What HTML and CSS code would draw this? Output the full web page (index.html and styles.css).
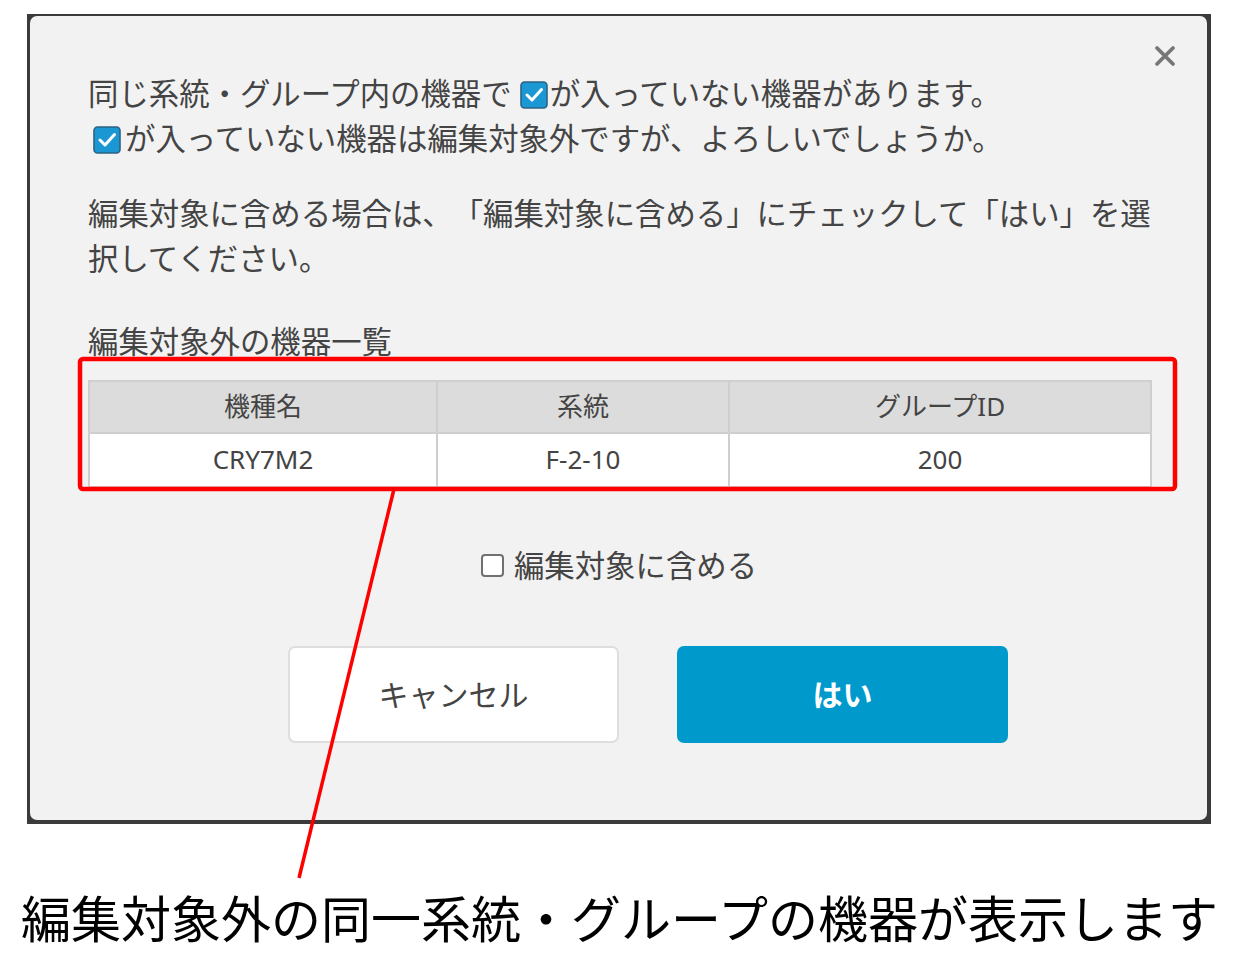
FILE: index.html
```html
<!DOCTYPE html>
<html>
<head>
	<meta charset="UTF-8">
	<title>編集対象外の機器</title>
	<link rel="stylesheet" href="styles.css">
</head>
<body>

<div class="backdrop">
	<div class="dialog">
		<button class="close" type="button" title="閉じる">
			<svg width="22" height="22" viewBox="0 0 22 22"><path d="M3 3 L19 19 M19 3 L3 19" stroke="#777" stroke-width="3.8" stroke-linecap="round"/></svg>
		</button>

		<p class="msg">同じ系統・グループ内の機器で<svg class="tick" width="28" height="28" viewBox="0 0 28 28"><rect x="1" y="1" width="26" height="26" rx="3.5" fill="#1b97d3" stroke="#2c6384" stroke-width="1.6"/><path d="M7 14 L12 19 L21.5 8.5" fill="none" stroke="#fff" stroke-width="3" stroke-linecap="round" stroke-linejoin="round"/></svg>が入っていない機器があります。<br><svg class="tick tick-first" width="28" height="28" viewBox="0 0 28 28"><rect x="1" y="1" width="26" height="26" rx="3.5" fill="#1b97d3" stroke="#2c6384" stroke-width="1.6"/><path d="M7 14 L12 19 L21.5 8.5" fill="none" stroke="#fff" stroke-width="3" stroke-linecap="round" stroke-linejoin="round"/></svg>が入っていない機器は編集対象外ですが、よろしいでしょうか。</p>

		<p class="msg msg-next">編集対象に含める場合は、「編集対象に含める」にチェックして「はい」を選択してください。</p>

		<h4 class="list-title">編集対象外の機器一覧</h4>

		<table class="devices">
			<colgroup>
				<col class="col-model">
				<col class="col-line">
				<col class="col-group">
			</colgroup>
			<thead>
				<tr><th>機種名</th><th>系統</th><th>グループID</th></tr>
			</thead>
			<tbody>
				<tr><td>CRY7M2</td><td>F-2-10</td><td>200</td></tr>
			</tbody>
		</table>

		<label class="include"><input type="checkbox" class="include-box"><span>編集対象に含める</span></label>

		<div class="actions">
			<button class="btn btn-cancel" type="button">キャンセル</button>
			<button class="btn btn-ok" type="button">はい</button>
		</div>
	</div>
</div>

<p class="caption">編集対象外の同一系統・グループの機器が表示します</p>

<!-- annotation drawn over the screenshot -->
<svg class="callout" width="1242" height="963" viewBox="0 0 1242 963">
	<rect x="80" y="359" width="1095" height="130" rx="3" fill="none" stroke="#ff0000" stroke-width="4.5"/>
	<line x1="394" y1="489" x2="299" y2="878" stroke="#ff0000" stroke-width="3.5"/>
</svg>

</body>
</html>
```

FILE: styles.css
```css
html, body {
	margin: 0;
	padding: 0;
	background: #FFFFFF;
}

body {
	font-family: "Noto Sans", "Noto Sans CJK JP", sans-serif;
	color: #444444;
	width: 1242px;
	height: 963px;
	overflow: hidden;
	text-spacing-trim: space-all;
}

.backdrop {
	margin: 14px 0 0 27px;
	width: 1184px;
	height: 810px;
	box-sizing: border-box;
	padding: 2px 4px 4px 3px;
	background: #3b3b3b;
}

.dialog {
	position: relative;
	height: 804px;
	box-sizing: border-box;
	padding: 55px 57px 0 58px;
	background: #F2F2F2;
	border-radius: 7px;
}

.close {
	position: absolute;
	top: 29px;
	left: 1124px;
	width: 22px;
	height: 22px;
	padding: 0;
	border: none;
	background: transparent;
	cursor: pointer;
}

.close svg {
	display: block;
}

.msg {
	margin: 0 -12px 0 0;
	font-size: 30.4px;
	line-height: 45px;
}

.msg-next {
	margin-top: 30px;
}

.tick {
	vertical-align: -4px;
	margin: 0 2px 0 8px;
}

.tick-first {
	margin-left: 5px;
	margin-right: 4px;
}

.list-title {
	margin: 38px 0 0 0;
	font-size: 30.4px;
	line-height: 45px;
	font-weight: normal;
}

.devices {
	margin-top: 16px;
	width: 1062px;
	border-collapse: collapse;
	table-layout: fixed;
	font-size: 26px;
	line-height: 36px;
	color: #444444;
}

.col-model { width: 348px; }
.col-line { width: 292px; }
.col-group { width: 422px; }

.devices th,
.devices td {
	border: 2px solid #CFCFCF;
	text-align: center;
	padding: 0 0 3px 0;
	font-weight: normal;
}

.devices th {
	height: 47px;
	background: #DCDCDC;
}

.devices td {
	height: 49px;
	background: #FFFFFF;
}

.include {
	display: flex;
	justify-content: center;
	align-items: center;
	gap: 10px;
	margin-top: 55px;
	font-size: 30.4px;
	line-height: 45px;
	cursor: pointer;
}

.include-box {
	appearance: none;
	-webkit-appearance: none;
	margin: 0;
	width: 23px;
	height: 23px;
	border: 2px solid #707070;
	border-radius: 4px;
	background: #FFFFFF;
}

.actions {
	display: flex;
	justify-content: center;
	gap: 58px;
	margin-top: 58px;
	padding-left: 58px;
}

.btn {
	width: 331px;
	height: 97px;
	border-radius: 7px;
	font-family: inherit;
	font-size: 30px;
	line-height: 40px;
	padding: 0;
	cursor: pointer;
}

.btn-cancel {
	border: 2px solid #DEDEDE;
	background: #FFFFFF;
	color: #444444;
}

.btn-ok {
	border: none;
	background: #0099CC;
	color: #FFFFFF;
	font-weight: bold;
}

.caption {
	margin: 62px 0 0 21px;
	font-family: "Noto Sans CJK JP", sans-serif;
	font-size: 50px;
	line-height: 60px;
	color: #000000;
	white-space: nowrap;
}

.callout {
	position: absolute;
	left: 0;
	top: 0;
	pointer-events: none;
}
```
